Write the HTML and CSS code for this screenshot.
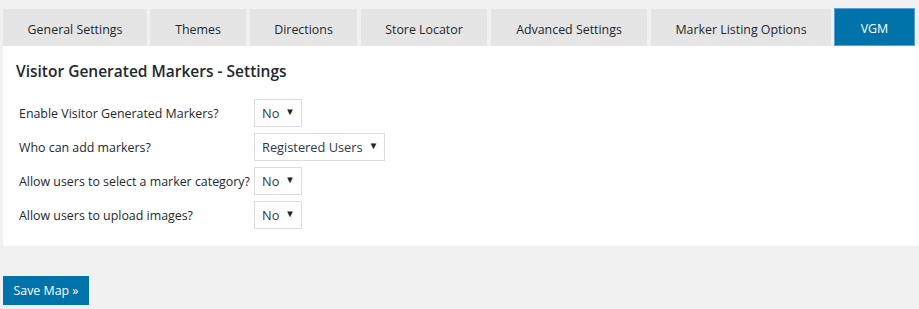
FILE: index.html
```html
<!DOCTYPE html>
<html>
<head>
<meta charset="utf-8">
<link rel="stylesheet" href="styles.css">
</head>
<body>
<div class="tabs">
  <div class="tab t1">General Settings</div>
  <div class="tab t2">Themes</div>
  <div class="tab t3">Directions</div>
  <div class="tab t4">Store Locator</div>
  <div class="tab t5">Advanced Settings</div>
  <div class="tab t6">Marker Listing Options</div>
  <div class="tab active">VGM</div>
</div>
<div class="panel">
  <h3 class="title">Visitor Generated Markers - Settings</h3>
  <div class="form">
    <div class="label">Enable Visitor Generated Markers?</div>
    <div class="field"><span class="select w-no">No<span class="arrow">▼</span></span></div>
    <div class="label">Who can add markers?</div>
    <div class="field"><span class="select w-reg">Registered Users<span class="arrow">▼</span></span></div>
    <div class="label">Allow users to select a marker category?</div>
    <div class="field"><span class="select w-no">No<span class="arrow">▼</span></span></div>
    <div class="label">Allow users to upload images?</div>
    <div class="field"><span class="select w-no">No<span class="arrow">▼</span></span></div>
  </div>
</div>
<div class="actions">
  <button class="save">Save Map »</button>
</div>
</body>
</html>
```
FILE: styles.css
```css
html, body {
  margin: 0;
  padding: 0;
}
body {
  background: #f1f1f1;
  font-family: "Segoe UI", "Open Sans", "Noto Sans", sans-serif;
  color: #23282d;
  font-size: 13px;
  width: 919px;
  height: 309px;
  overflow: hidden;
}
.tabs {
  display: flex;
  align-items: flex-end;
  padding: 8px 0 0 3px;
  gap: 3px;
  box-sizing: border-box;
  height: 46px;
}
.tab {
  height: 37px;
  background: #e5e5e5;
  display: flex;
  align-items: center;
  justify-content: center;
  font-size: 12.4px;
  color: #23282d;
  box-sizing: border-box;
  padding-top: 3px;
}
.t1 { width: 144px; }
.t2 { width: 96px; margin-left: 0; }
.t3 { width: 107px; margin-left: 1px; }
.t4 { width: 126px; margin-left: 1px; }
.t5 { width: 156px; margin-left: 1px; }
.t6 { width: 180px; margin-left: 1px; }
.tab.active {
  width: 81px;
  height: 38px;
  background: #0073aa;
  border: 1px solid #5b9dd9;
  color: #fff;
  margin-left: 0;
  padding-top: 3px;
}
.panel {
  margin-left: 3px;
  background: #fff;
  height: 200px;
  box-sizing: border-box;
  padding: 14px 16px 0 13px;
}
.title {
  margin: 0;
  font-size: 15.5px;
  font-weight: 600;
  line-height: 22px;
  color: #23282d;
}
.form {
  display: grid;
  grid-template-columns: 235px auto;
  grid-auto-rows: 34px;
  margin-top: 17px;
  margin-left: 3px;
  align-items: center;
}
.label {
  font-size: 12.4px;
  color: #23282d;
  white-space: nowrap;
  line-height: 28px;
  align-self: start;
  padding-top: 1px;
}
.field {
  align-self: start;
}
.select {
  display: inline-flex;
  align-items: center;
  justify-content: space-between;
  box-sizing: border-box;
  height: 28px;
  border: 1px solid #ddd;
  padding: 0 8px 0 7px;
  font-size: 12.8px;
  color: #32373c;
  background: #fff;
  white-space: nowrap;
}
.w-no { width: 48px; }
.w-reg { width: 131px; }
.arrow {
  font-size: 9.5px;
  color: #222;
  margin-top: -4px;
  margin-left: 6px;
}
.actions {
  padding: 30px 0 0 3px;
}
.save {
  display: block;
  height: 29px;
  width: 86px;
  background: #0073aa;
  border: none;
  color: #fff;
  font-family: "Segoe UI", "Open Sans", "Noto Sans", sans-serif;
  font-size: 12.4px;
  padding: 0 0 1px 0;
  margin: 0;
  border-radius: 0;
}
```
